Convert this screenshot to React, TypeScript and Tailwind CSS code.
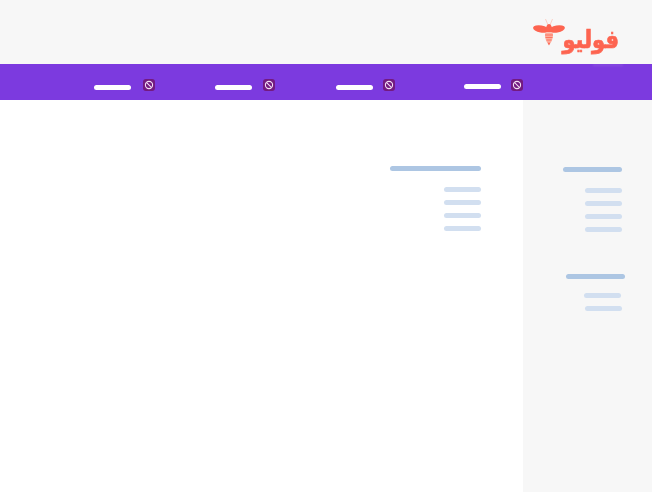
const Bar = ({ w, className = "" }: { w: string; className?: string }) => (
  <div className={`h-[5px] rounded-full ${w} ${className}`} />
);

const Badge = ({ className = "" }: { className?: string }) => (
  <span className={`flex h-3 w-3 shrink-0 items-center justify-center rounded-[3px] bg-[#731a80] ${className}`}>
    <svg width="10" height="10" viewBox="0 0 10 10" fill="none" stroke="#f3dff3" strokeWidth="1.1">
      <circle cx="5" cy="5" r="3.6" />
      <path d="M2.6 2.6 7.4 7.4" />
    </svg>
  </span>
);

const Bee = () => (
  <svg width="33" height="30" viewBox="0 0 33 30" className="shrink-0">
    <path d="M15 7 12.500 1M17 7l2.500-6" stroke="#fbc4b8" strokeWidth="0.8" fill="none" />
    <ellipse cx="8" cy="11" rx="8" ry="3.600" transform="rotate(10 8 11)" fill="#fd6450" />
    <ellipse cx="24" cy="11" rx="8" ry="3.600" transform="rotate(-10 24 11)" fill="#fd6450" />
    <path d="M16 6 C18 6 19.500 9 19.200 14 L12.800 14 C12.500 9 14 6 16 6Z" fill="#fd6450" />
    <path d="M12 16 C12 13.500 20 13.500 20 16 C20.300 20 18.500 24.500 16 27 C13.500 24.500 11.700 20 12 16Z" fill="#fdae9e" />
    <path d="M12.200 17h7.600M12.500 19.500h7M13.500 22h5" stroke="#fd6450" strokeWidth="0.8" />
    <path d="M14.800 24.800h2.400L16 27.500z" fill="#fd6450" />
  </svg>
);

const navItems = [
  { ml: "ml-[94px]", gap: "mr-3", y: "mt-[6px]" },
  { ml: "ml-[60px]", gap: "mr-[11px]", y: "mt-[6px]" },
  { ml: "ml-[61px]", gap: "mr-[10px]", y: "mt-[6px]" },
  { ml: "ml-[69px]", gap: "mr-[10px]", y: "mt-[5px]" },
];

export default function App() {
  return (
    <div className="flex h-[492px] w-full flex-col overflow-hidden bg-white font-['Liberation_Sans',sans-serif]">
      <header className="flex h-16 shrink-0 items-start justify-end bg-[#f7f7f7] pr-[33px] pt-[18px]">
        <div className="flex items-start">
          <Bee />
          <span
            dir="rtl"
            className="-ml-[4px] mt-[6px] origin-top scale-y-[1.2] text-[21px] font-bold leading-[26px] text-[#fd6450] [-webkit-text-stroke:0.6px_#fd6450] font-['DejaVu_Sans',sans-serif]"
          >
            فوليو
          </span>
        </div>
      </header>

      <nav className="relative flex h-9 shrink-0 items-start bg-[#7c3adf] pt-[15px]">
        <span className="absolute right-[29px] top-0 h-[2px] w-[30px] bg-white/10 blur-[1px]" />
        {navItems.map((item, i) => (
          <div key={i} className={`flex items-start ${item.ml}`}>
            <Bar w="w-[37px]" className={`bg-white ${item.gap} ${item.y}`} />
            <Badge />
          </div>
        ))}
      </nav>

      <div className="flex min-h-0 flex-1">
        <main className="flex w-[523px] shrink-0 flex-col items-end pr-[42px] pt-[66px]">
          <Bar w="w-[91px]" className="mb-4 bg-[#adc6e3]" />
          <div className="flex flex-col items-end gap-2">
            {[0, 1, 2, 3].map((i) => (
              <Bar key={i} w="w-[37px]" className="bg-[#d2dff0]" />
            ))}
          </div>
        </main>

        <aside className="flex flex-1 flex-col items-end bg-[#f7f7f7] pr-[30px] pt-[67px]">
          <Bar w="w-[59px]" className="mb-4 bg-[#adc6e3]" />
          <div className="flex flex-col items-end gap-2">
            {[0, 1, 2, 3].map((i) => (
              <Bar key={i} w="w-[37px]" className="bg-[#d2dff0]" />
            ))}
          </div>
          <Bar w="w-[59px]" className="-mr-[3px] mb-[14px] mt-[42px] bg-[#adc6e3]" />
          <div className="flex flex-col items-end gap-2">
            <Bar w="w-[37px]" className="mr-[1px] bg-[#d2dff0]" />
            <Bar w="w-[37px]" className="bg-[#d2dff0]" />
          </div>
        </aside>
      </div>
    </div>
  );
}
